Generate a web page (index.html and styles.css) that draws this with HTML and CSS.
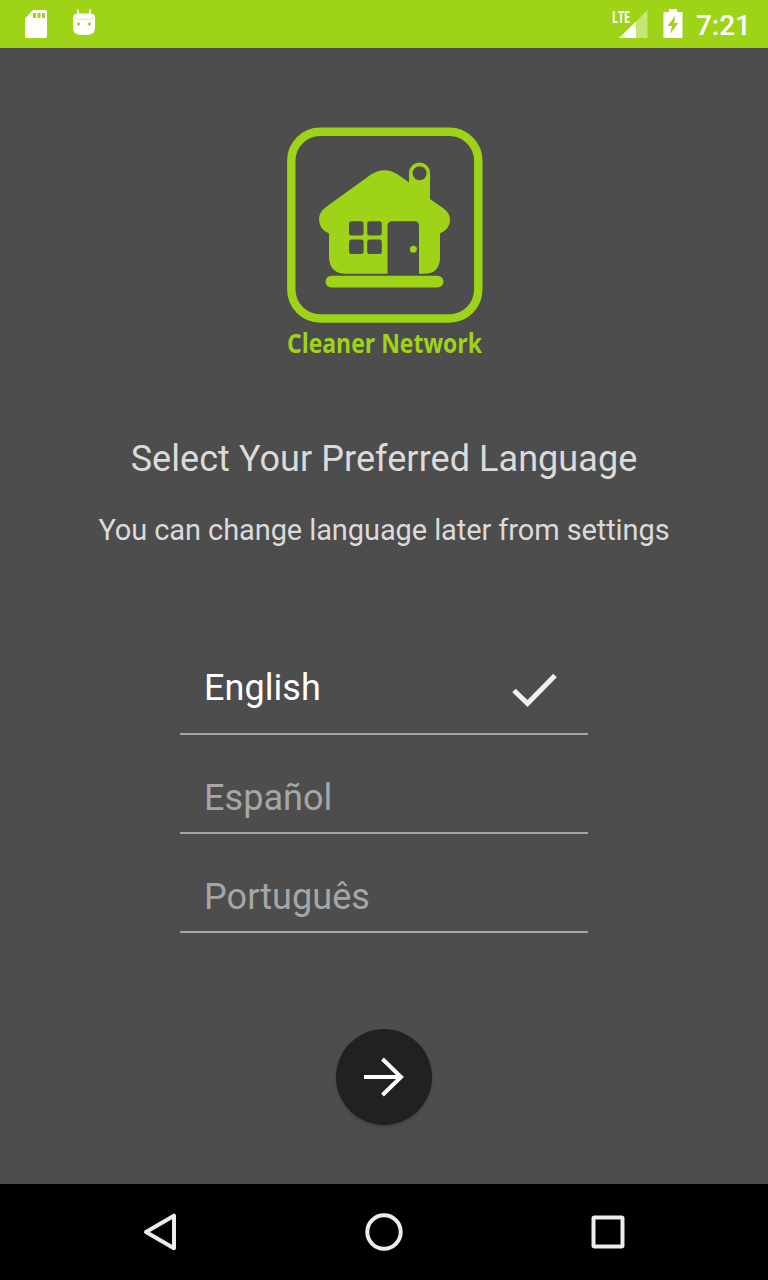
FILE: index.html
```
<!DOCTYPE html>
<html lang="en">
<head>
    <meta charset="UTF-8">
    <meta name="viewport" content="width=device-width, initial-scale=1.0">
    <title>Cleaner Network</title>
    <link rel="stylesheet" href="styles.css">
</head>
<body>

    <header class="status-bar">
        <div class="status-left">
            <svg class="icon-sd" width="24" height="30" viewBox="0 0 24 30">
                <path fill="#fff" fill-rule="evenodd" d="M9 1h12q2 0 2 2v24q0 2-2 2H3q-2 0-2-2V9.500zM9 4v5h3V4zM13.500 4v5h3V4zM18 4v5h3V4z"/>
            </svg>
            <svg class="icon-android" width="24" height="30" viewBox="0 0 24 30">
                <path stroke="#fff" stroke-width="1.500" stroke-linecap="round" d="M5.500 1l1.500 5M18.500 1l-1.500 5"/>
                <path fill="#fff" d="M1 8q0-3.500 5-3.500h12q5 0 5 3.500v10q0 8-8 8H9q-8 0-8-8z"/>
                <path fill="none" stroke="#d5ec9a" d="M2 8q2 2.500 10 2.500t10-2.500"/>
                <circle cx="6.500" cy="15" r="1.600" fill="#9fd317"/>
                <circle cx="17.500" cy="15" r="1.600" fill="#9fd317"/>
            </svg>
        </div>
        <div class="status-right">
            <svg class="icon-signal" width="38" height="30" viewBox="0 0 38 30">
                <path fill="#c5e574" d="M36.500 1v28H25V12.500z"/>
                <path fill="#fff" d="M8 29L25 12.500V29z"/>
                <text class="lte" x="1" y="13.500" textLength="18" lengthAdjust="spacingAndGlyphs">LTE</text>
            </svg>
            <svg class="icon-battery" width="20" height="30" viewBox="0 0 20 30">
                <path fill="#fff" d="M6 0h8v3h5.500v26H.5V3H6z"/>
                <path fill="#9fd317" d="M12.500 6.500L4.500 17h4.500l-2 8L15.500 14H11z"/>
            </svg>
            <span class="clock">7:21</span>
        </div>
    </header>

    <main class="content">
        <svg class="logo" width="210" height="240" viewBox="0 0 210 240">
            <rect x="11.300" y="11.800" width="187" height="186.700" rx="29" fill="none" stroke="#9fd317" stroke-width="8.400"/>
            <!-- house -->
            <path fill="#9fd317" d="M49 113.500Q39 109 39 99.500Q39 92 46 87L91 54.500Q104.500 46 118 54.500L129 62.500V53a10.500 10.500 0 0 1 21 0V79L163 88Q170 93 170 100Q170 109 160 113.500V137Q160 153.800 144 153.800H66Q49 153.800 49 136z"/>
            <rect x="45.500" y="155.700" width="118" height="11.800" rx="5.900" fill="#9fd317"/>
            <g fill="#4d4d4d">
                <circle cx="139.600" cy="53.300" r="7"/>
                <rect x="69" y="101.200" width="14.600" height="14.300" rx="2.500"/>
                <rect x="87.200" y="101.200" width="14.600" height="14.300" rx="2.500"/>
                <rect x="69" y="119.600" width="14.600" height="14.300" rx="2.500"/>
                <rect x="87.200" y="119.600" width="14.600" height="14.300" rx="2.500"/>
                <path d="M107.500 154.500V106q0-4.800 4.800-4.800h21.900q4.800 0 4.800 4.800v48.500z"/>
            </g>
            <circle cx="133.400" cy="129.300" r="3.500" fill="#9fd317"/>
            <text class="logo-text" x="7" y="232.500" textLength="195" lengthAdjust="spacingAndGlyphs">Cleaner Network</text>
        </svg>

        <h1 class="title">Select Your Preferred Language</h1>
        <p class="subtitle">You can change language later from settings</p>

        <ul class="languages">
            <li class="language selected">
                <span>English</span>
                <svg class="check" width="48" height="40" viewBox="0 0 48 40">
                    <path fill="none" stroke="#f0f0f0" stroke-width="5" d="M4 20.500l13.500 13L45 5.500"/>
                </svg>
            </li>
            <li class="language">Español</li>
            <li class="language">Português</li>
        </ul>

        <button class="next" aria-label="Next">
            <svg width="48" height="48" viewBox="0 0 48 48">
                <path fill="none" stroke="#fff" stroke-width="4" d="M4 24h37M22.500 6L41 24L22.500 42"/>
            </svg>
        </button>
    </main>

    <nav class="nav-bar">
        <svg width="48" height="48" viewBox="0 0 48 48">
            <path d="M38 7.700v32.600L10 24z"/>
        </svg>
        <svg width="48" height="48" viewBox="0 0 48 48">
            <circle cx="24" cy="24" r="16.700"/>
        </svg>
        <svg width="48" height="48" viewBox="0 0 48 48">
            <rect x="9.500" y="9.500" width="29" height="29" rx="1"/>
        </svg>
    </nav>

</body>
</html>
```
FILE: styles.css
```
* {
    box-sizing: border-box;
}

body {
    margin: 0;
    height: 1280px;
    display: flex;
    flex-direction: column;
    background-color: #4d4d4d;
    font-family: Roboto, sans-serif;
}

.status-bar {
    height: 48px;
    padding: 0 17px 0 24px;
    display: flex;
    justify-content: space-between;
    background-color: #9fd317;
}

.status-left,
.status-right {
    display: flex;
    align-items: center;
}

.status-left {
    gap: 24px;
}

.icon-signal {
    margin-right: 14px;
    overflow: visible;
}

.lte {
    font-family: "Open Sans", sans-serif;
    font-size: 16px;
    font-weight: bold;
    fill: #fff;
}

.clock {
    margin-left: 13px;
    padding-top: 3px;
    font-size: 28px;
    font-weight: 500;
    line-height: 45px;
    color: #fff;
}

.content {
    flex: 1;
    padding-top: 72px;
    display: flex;
    flex-direction: column;
    align-items: center;
}

.logo {
    margin-left: 2px;
    overflow: visible;
}

.logo-text {
    font-family: "Open Sans", sans-serif;
    font-size: 26.5px;
    font-weight: bold;
    fill: #9fd317;
}

.title {
    margin: 77px 0 0;
    font-size: 36px;
    font-weight: 400;
    line-height: 44px;
    letter-spacing: 0.06px;
    color: #dbdbdb;
}

.subtitle {
    margin: 31px 0 0;
    font-size: 29px;
    line-height: 36px;
    letter-spacing: -0.09px;
    color: #dbdbdb;
}

.languages {
    width: 408px;
    margin: 86px 0 0;
    padding: 0;
    list-style: none;
}

.language {
    height: 99px;
    padding: 28px 24px 0;
    border-bottom: 2px solid #a6a6a6;
    font-size: 36px;
    line-height: 70px;
    letter-spacing: 0.06px;
    color: #a6a6a6;
}

.selected {
    height: 101px;
    padding: 8px 30px 0 24px;
    display: flex;
    justify-content: space-between;
    align-items: center;
    color: #fff;
}

.check {
    margin-top: 4px;
}

.next {
    width: 96px;
    height: 96px;
    margin-top: 96px;
    padding: 0;
    display: flex;
    justify-content: center;
    align-items: center;
    border: none;
    border-radius: 50%;
    background-color: #212121;
    box-shadow: 0 2px 3px rgba(0, 0, 0, 0.15);
}

.nav-bar {
    height: 96px;
    padding: 0 136px;
    display: flex;
    justify-content: space-between;
    align-items: center;
    background-color: #000;
}

.nav-bar svg {
    fill: none;
    stroke: #ececec;
    stroke-width: 4;
    stroke-linejoin: round;
}
```
